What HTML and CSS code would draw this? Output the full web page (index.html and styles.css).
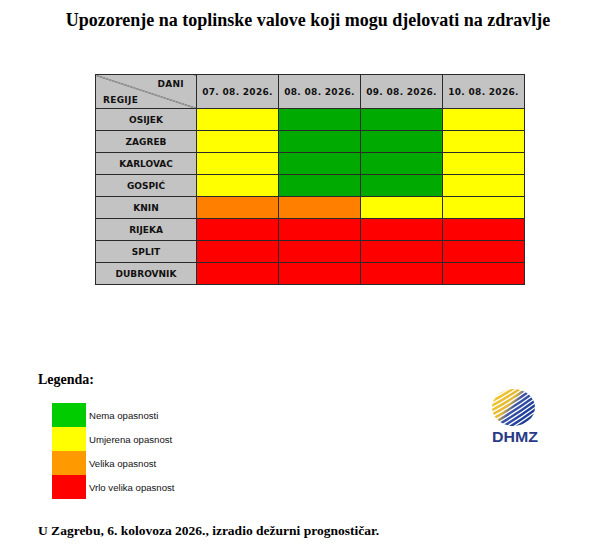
FILE: index.html
```html
<!DOCTYPE html>
<html lang="hr">
<head>
<meta charset="utf-8">
<title>Upozorenje na toplinske valove</title>
<link rel="stylesheet" href="styles.css">
</head>
<body>
<div class="page">
  <h1 class="title">Upozorenje na toplinske valove koji mogu djelovati na zdravlje</h1>

  <table class="warn">
    <tr class="head">
      <th class="corner"><span class="dani">DANI</span><span class="regije">REGIJE</span></th>
      <th>07. 08. 2026.</th>
      <th>08. 08. 2026.</th>
      <th>09. 08. 2026.</th>
      <th>10. 08. 2026.</th>
    </tr>
    <tr><th>OSIJEK</th><td class="y"></td><td class="g"></td><td class="g"></td><td class="y"></td></tr>
    <tr><th>ZAGREB</th><td class="y"></td><td class="g"></td><td class="g"></td><td class="y"></td></tr>
    <tr><th>KARLOVAC</th><td class="y"></td><td class="g"></td><td class="g"></td><td class="y"></td></tr>
    <tr><th>GOSPIĆ</th><td class="y"></td><td class="g"></td><td class="g"></td><td class="y"></td></tr>
    <tr><th>KNIN</th><td class="o"></td><td class="o"></td><td class="y"></td><td class="y"></td></tr>
    <tr><th>RIJEKA</th><td class="r"></td><td class="r"></td><td class="r"></td><td class="r"></td></tr>
    <tr><th>SPLIT</th><td class="r"></td><td class="r"></td><td class="r"></td><td class="r"></td></tr>
    <tr><th>DUBROVNIK</th><td class="r"></td><td class="r"></td><td class="r"></td><td class="r"></td></tr>
  </table>

  <div class="legend-section">
    <div class="legend">
      <h2 class="legend-title">Legenda:</h2>
      <ul class="legend-list">
        <li><span class="sw sw-g"></span><span class="lbl">Nema opasnosti</span></li>
        <li><span class="sw sw-y"></span><span class="lbl">Umjerena opasnost</span></li>
        <li><span class="sw sw-o"></span><span class="lbl">Velika opasnost</span></li>
        <li><span class="sw sw-r"></span><span class="lbl">Vrlo velika opasnost</span></li>
      </ul>
    </div>
    <svg class="logo" width="54" height="58" viewBox="0 0 54 58" aria-label="DHMZ">
      <defs>
        <clipPath id="ball"><ellipse cx="27.5" cy="21.5" rx="21.5" ry="18.5"/></clipPath>
        <linearGradient id="yb" gradientUnits="userSpaceOnUse" x1="12" y1="10" x2="38" y2="30">
          <stop offset="0" stop-color="#f2c42a"/>
          <stop offset="0.42" stop-color="#e3b93a"/>
          <stop offset="0.58" stop-color="#3b55ab"/>
          <stop offset="1" stop-color="#213f98"/>
        </linearGradient>
      </defs>
      <g clip-path="url(#ball)" fill="none" stroke="url(#yb)" stroke-linecap="round" stroke-width="2.5">
        <path d="M-6 12 Q20 0 50 -22"/>
        <path d="M-6 16.5 Q20 4.5 50 -17.5"/>
        <path d="M-6 21 Q20 9 50 -13"/>
        <path d="M-6 25.5 Q20 13.5 50 -8.5"/>
        <path d="M-6 30 Q20 18 50 -4"/>
        <path d="M-6 34.5 Q20 22.5 50 0.5"/>
        <path d="M-6 39 Q20 27 50 5"/>
        <path d="M-6 43.5 Q20 31.5 50 9.5"/>
        <path d="M-6 48 Q20 36 50 14"/>
        <path d="M-6 52.5 Q20 40.5 50 18.5"/>
        <path d="M-6 57 Q20 45 50 23"/>
        <path d="M-6 61.5 Q20 49.5 50 27.5"/>
        <path d="M-6 66 Q20 54 50 32"/>
      </g>
      <text class="logo-text" x="6" y="56" textLength="46" lengthAdjust="spacingAndGlyphs">DHMZ</text>
    </svg>
  </div>

  <p class="footer">U Zagrebu, 6. kolovoza 2026., izradio dežurni prognostičar.</p>
</div>
</body>
</html>
```

FILE: styles.css
```css
html, body {
  margin: 0;
  padding: 0;
  background: #ffffff;
}

.page {
  width: 616px;
  height: 558px;
  position: relative;
}

.title {
  margin: 0;
  padding-top: 9px;
  font-family: "Liberation Serif", "Times New Roman", serif;
  font-weight: bold;
  font-size: 18px;
  line-height: 22px;
  text-align: center;
  color: #000;
}

.warn {
  border-collapse: collapse;
  margin: 43px auto 0 95px;
  font-family: "DejaVu Sans", sans-serif;
  font-weight: bold;
  font-size: 9px;
  color: #111;
}

.warn th,
.warn td {
  border: 1px solid #2a2a2a;
  padding: 0;
  height: 21px;
  text-align: center;
  vertical-align: middle;
}

.warn th {
  background: #c3c3c3;
  width: 100px;
}

.warn .head th {
  height: 33px;
  width: 81px;
  letter-spacing: 0.3px;
}

.warn .head th.corner {
  width: 100px;
  position: relative;
  background: linear-gradient(to top right, #c3c3c3 calc(50% - 0.6px), #3a3a3a 50%, #c3c3c3 calc(50% + 0.6px));
}

.dani {
  position: absolute;
  right: 12px;
  top: 4px;
}

.regije {
  position: absolute;
  left: 7px;
  bottom: 3px;
}

.warn td { width: 81px; }
.warn td.y { background: #ffff00; }
.warn td.g { background: #00aa00; }
.warn td.o { background: #ff7f00; }
.warn td.r { background: #ff0000; }

.legend-section {
  display: flex;
  justify-content: space-between;
  padding: 0 76px 0 38px;
  margin-top: 86px;
}

.legend-title {
  margin: 0;
  font-family: "Liberation Serif", "Times New Roman", serif;
  font-weight: bold;
  font-size: 14px;
  line-height: 18px;
  color: #000;
}

.legend-list {
  list-style: none;
  margin: 14px 0 0 14px;
  padding: 0;
}

.legend-list li {
  display: flex;
  align-items: center;
  height: 24px;
}

.sw {
  display: block;
  width: 34px;
  height: 24px;
}

.sw-g { background: #00cc00; }
.sw-y { background: #ffff00; }
.sw-o { background: #ff9900; }
.sw-r { background: #ff0000; }

.lbl {
  margin-left: 3px;
  font-family: "Liberation Sans", Arial, sans-serif;
  font-size: 9.6px;
  color: #111;
}

.logo {
  margin-top: 15px;
}

.logo-text {
  font-family: "Liberation Sans", Arial, sans-serif;
  font-weight: bold;
  font-size: 15px;
  fill: #2b3a86;
}

.footer {
  margin: 23px 0 0 38px;
  font-family: "Liberation Serif", "Times New Roman", serif;
  font-weight: bold;
  font-size: 13.5px;
  line-height: 18px;
  color: #000;
}
```
